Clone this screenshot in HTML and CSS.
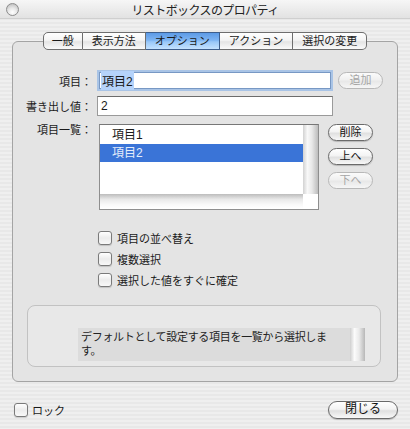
FILE: index.html
```html
<!DOCTYPE html>
<html lang="ja">
<head>
    <meta charset="UTF-8">
    <title>リストボックスのプロパティ</title>
    <link rel="stylesheet" href="styles.css">
</head>
<body>
    <div class="window">
        <div class="titlebar">
            <span class="close-dot"></span>
            <span class="title">リストボックスのプロパティ</span>
        </div>
        <div class="content">
            <div class="tabs">
                <span class="tab">一般</span>
                <span class="tab">表示方法</span>
                <span class="tab active">オプション</span>
                <span class="tab">アクション</span>
                <span class="tab">選択の変更</span>
            </div>
            <div class="groupbox">
                <div class="field-row">
                    <label class="field-label">項目：</label>
                    <div class="textfield focused"><span class="sel">項目2</span></div>
                    <button class="aqua-btn disabled">追加</button>
                </div>
                <div class="field-row second">
                    <label class="field-label">書き出し値：</label>
                    <div class="textfield">2</div>
                </div>
                <div class="list-row">
                    <label class="field-label">項目一覧：</label>
                    <div class="listbox">
                        <div class="list-items">
                            <div class="list-item">項目1</div>
                            <div class="list-item selected">項目2</div>
                        </div>
                        <div class="vscroll"></div>
                        <div class="hscroll"></div>
                        <div class="corner"></div>
                    </div>
                    <div class="list-buttons">
                        <button class="aqua-btn">削除</button>
                        <button class="aqua-btn">上へ</button>
                        <button class="aqua-btn disabled">下へ</button>
                    </div>
                </div>
                <div class="checks">
                    <div class="check-row"><span class="checkbox"></span>項目の並べ替え</div>
                    <div class="check-row"><span class="checkbox"></span>複数選択</div>
                    <div class="check-row"><span class="checkbox"></span>選択した値をすぐに確定</div>
                </div>
                <div class="descbox">
                    <div class="desc-text">
                        <p>デフォルトとして設定する項目を一覧から選択しま<br>す。</p>
                        <div class="desc-scroll"></div>
                    </div>
                </div>
            </div>
            <div class="footer">
                <div class="check-row lock"><span class="checkbox"></span>ロック</div>
                <button class="aqua-btn close-btn">閉じる</button>
            </div>
        </div>
    </div>
</body>
</html>
```

FILE: styles.css
```css
body {
    margin: 0;
    font-family: "Liberation Sans", "Noto Sans CJK JP", sans-serif;
    font-size: 11px;
    color: #1a1a1a;
}
.window {
    width: 410px;
    height: 429px;
    overflow: hidden;
    background: repeating-linear-gradient(to bottom, #efefef 0 2px, #e8e8e8 2px 4px);
}
.titlebar {
    height: 18px;
    display: flex;
    align-items: center;
    justify-content: center;
    position: relative;
    background: linear-gradient(#f6f6f6, #e2e2e2);
    border-bottom: 1px solid #cfcfcf;
}
.close-dot {
    position: absolute;
    left: 6px;
    top: 3px;
    width: 11px;
    height: 11px;
    border-radius: 50%;
    border: 1px solid #8c8c8c;
    background: radial-gradient(circle at 50% 75%, #ffffff 0, #e6e6e6 45%, #b4b4b4 100%);
}
.title {
    font-size: 12px;
    color: #222;
    letter-spacing: -0.6px;
}
.content {
    padding: 13px 12px 0 12px;
}
.tabs {
    display: flex;
    justify-content: center;
    position: relative;
    z-index: 1;
    margin-bottom: -9px;
}
.tab {
    height: 16px;
    line-height: 16px;
    padding: 0 9px;
    border: 1px solid #6e6e6e;
    border-left: none;
    background: linear-gradient(#ffffff, #f4f4f4 45%, #e4e4e4 55%, #fafafa);
}
.tab:first-child {
    border-left: 1px solid #6e6e6e;
    border-radius: 5px 0 0 5px;
    padding: 0 8px;
}
.tab:last-child {
    border-radius: 0 5px 5px 0;
}
.tab.active {
    background: linear-gradient(#5c9ae6, #7db4f2 45%, #98c7f8 55%, #c4e2ff);
    border-color: #3d5e8c;
}
.groupbox {
    border: 1px solid #a4a4a4;
    border-radius: 6px;
    background: #e4e4e4;
    padding-top: 28px;
    height: 311px;
}
.field-row {
    display: flex;
    align-items: center;
    height: 21px;
}
.field-row.second {
    margin-top: 5px;
    height: 20px;
}
.field-label {
    width: 79px;
    text-align: right;
    flex-shrink: 0;
}
.textfield {
    margin-left: 5px;
    width: 236px;
    height: 100%;
    box-sizing: border-box;
    background: #fff;
    border: 1px solid #9a9a9a;
    border-top-color: #6c6c6c;
    padding: 0 3px;
    display: flex;
    align-items: center;
    font-size: 12px;
}
.textfield.focused {
    border: 2px solid #a9c4e6;
    box-shadow: inset 0 0 0 1px #7898c4;
    padding: 0 2px;
}
.sel {
    background: #b5d3fa;
    padding: 1px 1px;
}
.aqua-btn {
    font-family: inherit;
    font-size: 11px;
    color: #111;
    height: 17px;
    padding: 0;
    border: 1px solid #6a6a6a;
    border-radius: 9px;
    background: linear-gradient(#ffffff, #f3f3f3 45%, #e0e0e0 55%, #f8f8f8);
    box-shadow: 0 1px 1px rgba(0, 0, 0, 0.2);
    width: 45px;
    line-height: 15px;
}
.aqua-btn.disabled {
    color: #a6a6a6;
    border-color: #b8b8b8;
    background: linear-gradient(#fbfbfb, #f0f0f0 45%, #e8e8e8 55%, #f6f6f6);
    box-shadow: none;
}
.field-row .aqua-btn {
    margin-left: 5px;
}
.list-row {
    display: flex;
    margin-top: 8px;
}
.list-row .field-label {
    line-height: 12px;
}
.listbox {
    margin-left: 7px;
    width: 220px;
    height: 86px;
    box-sizing: border-box;
    border: 1px solid #8e8e8e;
    border-top-color: #777;
    background: #fff;
    display: grid;
    grid-template-columns: 1fr 15px;
    grid-template-rows: 1fr 15px;
}
.list-items {
    padding-top: 1px;
}
.list-item {
    height: 18px;
    line-height: 18px;
    padding-left: 12px;
    font-size: 12px;
}
.list-item.selected {
    background: #3a74d7;
    color: #e4ecfa;
}
.vscroll {
    background: linear-gradient(to right, #d2d2d2 0, #f8f8f8 30%, #e8e8e8 60%, #bcbcbc 100%);
}
.hscroll {
    background: linear-gradient(#bcbcbc 0, #e8e8e8 35%, #f8f8f8 70%, #ffffff 100%);
}
.corner {
    background: #fff;
}
.list-buttons {
    margin-left: 9px;
    display: flex;
    flex-direction: column;
    gap: 7px;
}
.checks {
    margin: 17px 0 0 85px;
    display: flex;
    flex-direction: column;
}
.check-row {
    display: flex;
    align-items: center;
    gap: 5px;
    height: 21px;
}
.checkbox {
    width: 12px;
    height: 12px;
    border: 1px solid #7a7a7a;
    border-radius: 3px;
    background: linear-gradient(#ffffff, #ececec 50%, #f8f8f8);
    box-shadow: 0 1px 1px rgba(0, 0, 0, 0.15);
}
.descbox {
    margin: 15px 0 0 14px;
    width: 354px;
    height: 62px;
    box-sizing: border-box;
    border: 1px solid #c2c2c2;
    border-radius: 8px;
    background: #e8e8e8;
    padding: 22px 15px 0 50px;
}
.desc-text {
    display: flex;
    height: 33px;
    background: #dcdcdc;
}
.desc-text p {
    margin: 0;
    flex: 1;
    padding: 2px 0 0 3px;
    line-height: 14px;
    letter-spacing: -0.3px;
    color: #222;
}
.desc-scroll {
    width: 15px;
    background: linear-gradient(to right, #cfcfcf 0, #fbfbfb 30%, #eaeaea 60%, #b8b8b8 100%);
}
.footer {
    display: flex;
    justify-content: space-between;
    align-items: center;
    padding: 17px 0 0 2px;
}
.lock {
    gap: 4px;
}
.close-btn {
    width: 70px;
    height: 18px;
    font-size: 12px;
}
```
